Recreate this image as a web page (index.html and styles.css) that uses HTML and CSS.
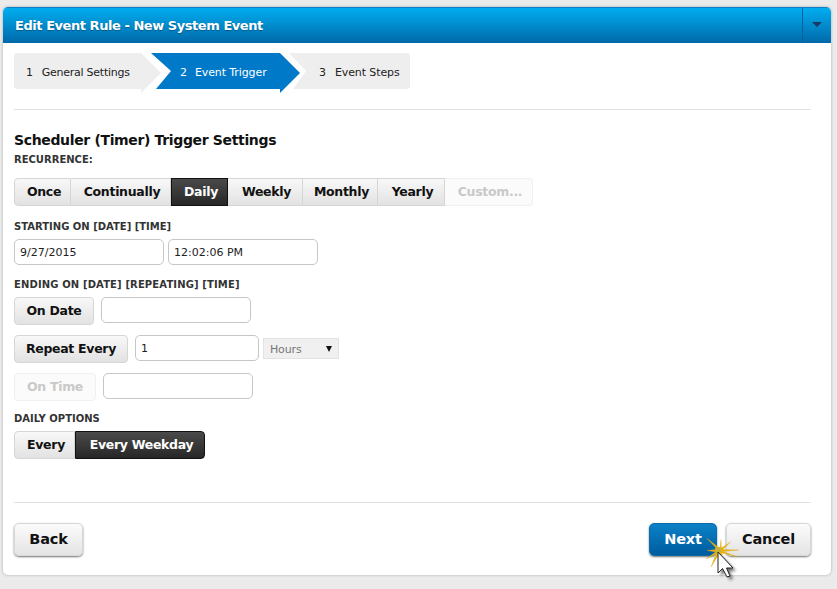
FILE: index.html
```html
<!DOCTYPE html>
<html lang="en">
<head>
<meta charset="utf-8">
<title>Edit Event Rule</title>
<link rel="stylesheet" href="styles.css">
</head>
<body>
<div class="panel">
  <header class="head">
    <h1 class="head-title">Edit Event Rule - New System Event</h1>
    <div class="head-menu"><span class="caret"></span></div>
  </header>
  <div class="body">
    <nav class="steps">
      <div class="step step-first"><span class="num">1</span><span>General Settings</span></div>
      <div class="step step-mid"><span class="num">2</span><span>Event Trigger</span></div>
      <div class="step step-last"><span class="num">3</span><span>Event Steps</span></div>
    </nav>
    <hr class="rule rule-top">
    <h2 class="section">Scheduler (Timer) Trigger Settings</h2>
    <div class="label label-rec">RECURRENCE:</div>
    <div class="seg seg-rec">
      <span class="sb w-once">Once</span>
      <span class="sb w-cont">Continually</span>
      <span class="sb on w-daily">Daily</span>
      <span class="sb w-week">Weekly</span>
      <span class="sb w-month">Monthly</span>
      <span class="sb w-year">Yearly</span>
      <span class="sb off w-cust">Custom...</span>
    </div>
    <div class="label label-start">STARTING ON [DATE] [TIME]</div>
    <div class="row row-start">
      <input class="field f150" value="9/27/2015">
      <input class="field f150" value="12:02:06 PM">
    </div>
    <div class="label label-end">ENDING ON [DATE] [REPEATING] [TIME]</div>
    <div class="row row-date">
      <span class="btn w-ondate">On Date</span>
      <input class="field f150">
    </div>
    <div class="row row-rep">
      <span class="btn w-repeat">Repeat Every</span>
      <input class="field f124" value="1">
      <div class="select"><span>Hours</span><span class="sel-arrow"></span></div>
    </div>
    <div class="row row-time">
      <span class="btn off w-ontime">On Time</span>
      <input class="field f150">
    </div>
    <div class="label label-daily">DAILY OPTIONS</div>
    <div class="seg seg-daily">
      <span class="sb w-every">Every</span>
      <span class="sb on w-weekday">Every Weekday</span>
    </div>
    <hr class="rule rule-bottom">
    <footer class="foot">
      <span class="action w-back">Back</span>
      <div class="foot-right">
        <span class="action primary w-next">Next</span>
        <span class="action w-cancel">Cancel</span>
      </div>
    </footer>
  </div>
</div>
<svg class="cursor" width="50" height="60" viewBox="0 0 50 60" aria-hidden="true">
  <defs>
    <filter id="blur" x="-50%" y="-50%" width="200%" height="200%"><feGaussianBlur stdDeviation="1.6"/></filter>
  </defs>
  <path d="M21 21 L21 42 L25.5 37.5 L30 46 L33 45 L29.5 37 L36 37 Z" transform="translate(3 3)" fill="#222" opacity=".65" filter="url(#blur)"/>
  <path d="M21 19 L9.5 7 L23 17.5 L24 8.5 L24.5 17 L33.5 11 L26 18.5 L42 19 L26 20.5 L41 26 L25 22 L25 30 L22 23 L14 36 L19 23 L9 28 L18.5 21 L10 19.5 L18.5 18.5 Z" fill="#e8b216" stroke="#d9a40e" stroke-width=".3"/>
  <circle cx="21" cy="19" r="3.2" fill="#c9b23a"/>
  <path d="M21 21 L21 42 L25.5 37.5 L30 46 L33 45 L29.5 37 L36 37 Z" fill="#fff" stroke="#222" stroke-width="1" stroke-linejoin="round"/>
</svg>
</body>
</html>
```
FILE: styles.css
```css
html, body { margin: 0; padding: 0; }
body {
  width: 837px;
  height: 589px;
  overflow: hidden;
  background: #ebebeb;
  position: relative;
  font-family: "DejaVu Sans", sans-serif;
  color: #111;
}
.panel {
  margin: 7px 0 0 3px;
  width: 828px;
  height: 568px;
  background: #fff;
  border-radius: 5px;
  box-shadow: 0 0 3px rgba(0,0,0,.28);
  overflow: hidden;
}
.head {
  height: 36px;
  box-sizing: border-box;
  border-top: 1px solid #0f7fc8;
  background: linear-gradient(#02adf0, #0069a9);
  display: flex;
  align-items: center;
  justify-content: space-between;
}
.head-title {
  margin: 0 0 0 12px;
  font-size: 13px;
  font-weight: bold;
  color: #fff;
  letter-spacing: -.45px;
  text-shadow: 0 1px 1px rgba(0,0,0,.3);
}
.head-menu {
  width: 28px;
  height: 100%;
  border-left: 1px solid #0a5f98;
  display: flex;
  align-items: center;
  justify-content: center;
}
.caret {
  width: 0; height: 0;
  margin-top: -2px;
  border-left: 5px solid transparent;
  border-right: 5px solid transparent;
  border-top: 5px solid #173a63;
}
.body { padding: 10px 0 0 11px; width: 797px; }

/* steps */
.steps { display: flex; height: 40px; font-size: 11px; letter-spacing: -.25px; }
.step {
  height: 40px;
  box-sizing: border-box;
  background: #eeeeee;
  display: flex;
  align-items: flex-start;
  gap: 9px;
  padding-top: 13px;
  color: #222;
}
.num { font-size: 11px; }
.step-first {
  width: 147px;
  padding-left: 12px;
  clip-path: path("M3 0 L127 0 L147 20 L127 40 L127 36 L3 36 Q0 36 0 33 L0 3 Q0 0 3 0 Z");
}
.step-mid {
  width: 149px;
  margin-left: -10px;
  padding-left: 29px;
  background: #0079c8;
  color: #fff;
  letter-spacing: -.1px;
  gap: 8px;
  clip-path: path("M0 0 L129 0 L149 20 L129 40 L129 36 L5 36 L20 18 Z");
}
.step-last {
  width: 121px;
  margin-left: -11px;
  padding-left: 30px;
  letter-spacing: -.1px;
  gap: 9px;
  clip-path: path("M0 0 L118 0 Q121 0 121 3 L121 33 Q121 36 118 36 L4 36 L17 18 Z");
}

.rule { border: 0; height: 1px; background: #e2e2e2; margin: 0; }
.rule-top { margin-top: 16px; }
.section {
  margin: 21px 0 0;
  font-size: 14px;
  font-weight: bold;
  line-height: 18px;
  color: #111;
  letter-spacing: -.35px;
}
.label { font-size: 10px; font-weight: bold; line-height: 13px; color: #333; letter-spacing: 0; }
.label-rec { margin-top: 4px; }
.label-start { margin-top: 14px; }
.label-end { margin-top: 13px; letter-spacing: .13px; }
.label-daily { margin-top: 11px; }

/* segmented */
.seg { display: flex; height: 28px; box-sizing: border-box; }
.seg-rec { margin-top: 12px; }
.seg-daily { margin-top: 6px; }
.sb {
  box-sizing: border-box;
  height: 28px;
  padding: 0 0 2px 3px;
  display: flex;
  align-items: center;
  justify-content: center;
  font-size: 12.5px;
  font-weight: bold;
  letter-spacing: -.3px;
  border: 1px solid #d6d6d6;
  border-left-width: 0;
  background: linear-gradient(#f8f8f8, #e2e2e2);
  color: #111;
}
.sb:first-child { border-left-width: 1px; border-radius: 4px 0 0 4px; }
.sb:last-child { border-radius: 0 4px 4px 0; }
.sb.on {
  background: linear-gradient(#4a4a4a, #272727);
  border: 1px solid #111;
  color: #fff;
}
.sb.off { background: #fbfbfb; color: #c9c9c9; border-color: #f0f0f0; }
.w-once { width: 57px; }
.w-cont { width: 100px; }
.w-daily { width: 57px; }
.w-week { width: 75px; }
.w-month { width: 75px; }
.w-year { width: 67px; }
.w-cust { width: 88px; }
.w-every { width: 61px; }
.w-weekday { width: 130px; }

/* rows */
.row { display: flex; align-items: flex-start; }
.row-start { margin-top: 6px; gap: 4px; }
.row-date { margin-top: 6px; gap: 7px; }
.row-rep { margin-top: 10px; gap: 7px; }
.row-time { margin-top: 10px; gap: 7px; }
.field {
  box-sizing: border-box;
  height: 26px;
  padding: 0 5px;
  border: 1px solid #c6c6c6;
  border-radius: 5px;
  background: #fff;
  font-family: "DejaVu Sans", sans-serif;
  font-size: 11px;
  color: #222;
  outline: none;
}
.f150 { width: 150px; }
.f124 { width: 124px; }
.btn {
  box-sizing: border-box;
  height: 28px;
  padding-bottom: 2px;
  display: flex;
  align-items: center;
  justify-content: center;
  font-size: 12.5px;
  font-weight: bold;
  letter-spacing: -.3px;
  border: 1px solid #d6d6d6;
  border-radius: 4px;
  background: linear-gradient(#f8f8f8, #e2e2e2);
  color: #111;
}
.btn.off { background: #fbfbfb; color: #c9c9c9; border-color: #f0f0f0; }
.w-ondate { width: 80px; }
.w-repeat { width: 114px; }
.w-ontime { width: 82px; }
.select {
  box-sizing: border-box;
  width: 76px;
  height: 21px;
  margin: 3px 0 0 -3px;
  padding: 1px 6px 0;
  display: flex;
  align-items: center;
  justify-content: space-between;
  background: #f0f0f0;
  border: 1px solid #e2e2e2;
  font-size: 11px;
  color: #777;
  letter-spacing: -.15px;
}
.sel-arrow {
  width: 0; height: 0;
  border-left: 3px solid transparent;
  border-right: 3px solid transparent;
  border-top: 6px solid #111;
}

.rule-bottom { margin-top: 43px; }
.foot { display: flex; justify-content: space-between; margin-top: 20px; }
.foot-right { display: flex; gap: 9px; }
.action {
  box-sizing: border-box;
  height: 33px;
  padding-bottom: 1px;
  display: flex;
  align-items: center;
  justify-content: center;
  font-size: 14.5px;
  font-weight: bold;
  letter-spacing: -.2px;
  border: 1px solid #d8d8d8;
  border-radius: 5px;
  background: linear-gradient(#fbfbfb, #e4e4e4);
  box-shadow: 0 1px 2px rgba(0,0,0,.55);
  color: #111;
}
.action.primary {
  background: linear-gradient(#0a82c8, #005b9f);
  border-color: #0d6ba8;
  color: #fff;
}
.w-back { width: 69px; }
.w-next { width: 68px; }
.w-cancel { width: 85px; }
.cursor { position: absolute; left: 697px; top: 531px; }
```
